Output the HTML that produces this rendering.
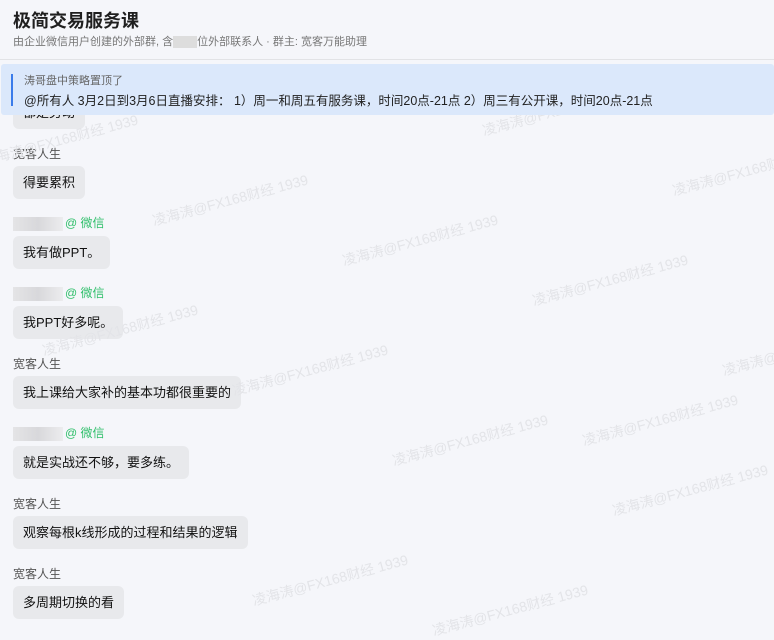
<!DOCTYPE html><html><head><meta charset="utf-8"><style>
body{margin:0;width:774px;height:634px;overflow:hidden;background:#f5f6fa;font-family:"Liberation Sans","Noto Sans CJK SC",sans-serif;position:relative}
.t{position:absolute;left:13px;top:7px;font-size:18px;font-weight:bold;color:#1f1f1f}
.s{position:absolute;left:13px;top:33px;font-size:11px;color:#777}
.blur{display:inline-block;width:24px;height:12px;background:#ddd;vertical-align:middle}
.hr{position:absolute;left:0;right:0;top:59px;border-top:1px solid #e2e3e6}
.pin{position:absolute;left:1px;right:0;top:64px;height:51px;background:#dbe8fb;border-radius:3px;z-index:5}
.pin .bar{position:absolute;left:10px;top:10px;width:2px;height:32px;background:#3a7bea}
.pin .a{position:absolute;left:23px;top:8px;font-size:11px;color:#666}
.pin .b{position:absolute;left:23px;top:26px;font-size:12.5px;color:#222}
.n{position:absolute;left:13px;font-size:12px;color:#555}
.g{color:#2fbf6a}
.nb{display:inline-block;width:50px;height:14px;background:linear-gradient(90deg,#e4e4e6,#d8d8db,#ececee);vertical-align:middle;margin-right:2px}
.m{position:absolute;left:13px;height:33px;line-height:33px;padding:0 10px;background:#e8e9ec;border-radius:6px;font-size:13px;color:#111}
.w{position:absolute;font-size:14px;color:#e3e4e8;transform:rotate(-15deg);white-space:nowrap;z-index:3}
</style></head><body>
<div class="w" style="left:-20px;top:130px">凌海涛@FX168财经 1939</div>
<div class="w" style="left:150px;top:190px">凌海涛@FX168财经 1939</div>
<div class="w" style="left:480px;top:100px">凌海涛@FX168财经 1939</div>
<div class="w" style="left:670px;top:160px">凌海涛@FX168财经 1939</div>
<div class="w" style="left:340px;top:230px">凌海涛@FX168财经 1939</div>
<div class="w" style="left:530px;top:270px">凌海涛@FX168财经 1939</div>
<div class="w" style="left:40px;top:320px">凌海涛@FX168财经 1939</div>
<div class="w" style="left:720px;top:340px">凌海涛@FX168财经 1939</div>
<div class="w" style="left:230px;top:360px">凌海涛@FX168财经 1939</div>
<div class="w" style="left:580px;top:410px">凌海涛@FX168财经 1939</div>
<div class="w" style="left:390px;top:430px">凌海涛@FX168财经 1939</div>
<div class="w" style="left:610px;top:480px">凌海涛@FX168财经 1939</div>
<div class="w" style="left:250px;top:570px">凌海涛@FX168财经 1939</div>
<div class="w" style="left:430px;top:600px">凌海涛@FX168财经 1939</div>
<div class="t">极简交易服务课</div>
<div class="s">由企业微信用户创建的外部群, 含<span class="blur"></span>位外部联系人 · 群主: 宽客万能助理</div>
<div class="hr"></div>
<div class="pin"><div class="bar"></div><div class="a">涛哥盘中策略置顶了</div><div class="b">@所有人 3月2日到3月6日直播安排： 1）周一和周五有服务课，时间20点-21点 2）周三有公开课，时间20点-21点</div></div>
<div class="m" style="top:96px">都是劳动</div>
<div class="n" style="top:145px">宽客人生</div><div class="m" style="top:166px">得要累积</div>
<div class="n" style="top:214px"><span class="nb"></span><span class="g">@ 微信</span></div><div class="m" style="top:236px">我有做PPT。</div>
<div class="n" style="top:284px"><span class="nb"></span><span class="g">@ 微信</span></div><div class="m" style="top:306px">我PPT好多呢。</div>
<div class="n" style="top:355px">宽客人生</div><div class="m" style="top:376px">我上课给大家补的基本功都很重要的</div>
<div class="n" style="top:424px"><span class="nb"></span><span class="g">@ 微信</span></div><div class="m" style="top:446px">就是实战还不够，要多练。</div>
<div class="n" style="top:495px">宽客人生</div><div class="m" style="top:516px">观察每根k线形成的过程和结果的逻辑</div>
<div class="n" style="top:565px">宽客人生</div><div class="m" style="top:586px">多周期切换的看</div>
</body></html>
